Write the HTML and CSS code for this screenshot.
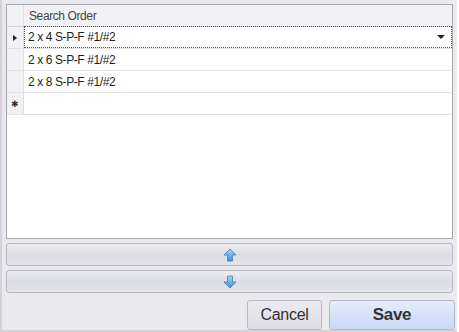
FILE: index.html
```html
<!DOCTYPE html>
<html lang="en">
<head>
    <meta charset="UTF-8">
    <title>Search Order</title>
    <link rel="stylesheet" href="styles.css">
</head>
<body>
    <div class="form">
        <div class="grid">
            <div class="row header">
                <div class="ind"></div>
                <div class="cell">Search Order</div>
            </div>
            <div class="row">
                <div class="ind"><span class="tri"></span></div>
                <div class="cell current">2 x 4 S-P-F #1/#2<span class="drop"></span></div>
            </div>
            <div class="row">
                <div class="ind"></div>
                <div class="cell">2 x 6 S-P-F #1/#2</div>
            </div>
            <div class="row">
                <div class="ind"></div>
                <div class="cell">2 x 8 S-P-F #1/#2</div>
            </div>
            <div class="row">
                <div class="ind"><span class="star">&#10033;</span></div>
                <div class="cell"></div>
            </div>
        </div>

        <button class="move">
            <svg width="14" height="14" viewBox="0 0 14 14">
                <defs>
                    <linearGradient id="gu" x1="0" y1="0" x2="0" y2="1">
                        <stop offset="0" stop-color="#a9d3f5"/>
                        <stop offset="1" stop-color="#3f8fd6"/>
                    </linearGradient>
                </defs>
                <path d="M7 1 L13 7 L9.5 7 L9.5 13 L4.5 13 L4.5 7 L1 7 Z" fill="url(#gu)" stroke="#3d7fbf" stroke-width="0.8" stroke-linejoin="round"/>
            </svg>
        </button>
        <button class="move">
            <svg width="14" height="14" viewBox="0 0 14 14">
                <defs>
                    <linearGradient id="gd" x1="0" y1="0" x2="0" y2="1">
                        <stop offset="0" stop-color="#a9d3f5"/>
                        <stop offset="1" stop-color="#3f8fd6"/>
                    </linearGradient>
                </defs>
                <path d="M4.5 1 L9.5 1 L9.5 7 L13 7 L7 13 L1 7 L4.5 7 Z" fill="url(#gd)" stroke="#3d7fbf" stroke-width="0.8" stroke-linejoin="round"/>
            </svg>
        </button>

        <div class="actions">
            <button class="btn cancel">Cancel</button>
            <button class="btn save">Save</button>
        </div>
    </div>
</body>
</html>
```

FILE: styles.css
```css
body {
    margin: 0;
    background: #fff;
    font-family: "Liberation Sans", Arial, sans-serif;
}

.form {
    width: 457px;
    height: 332px;
    background: #e9e9ee;
    border-left: 2px solid #d2d2d8;
    border-bottom: 2px solid #d2d2d8;
    padding: 4px 4px 0 4px;
    box-sizing: border-box;
    display: flex;
    flex-direction: column;
}

.grid {
    height: 235px;
    flex: none;
    background: #fff;
    border: 1px solid #a8a8b0;
    box-sizing: border-box;
    margin-bottom: 4px;
}

.row {
    display: flex;
    height: 21px;
    border-bottom: 1px solid #e1e1e6;
}

.ind {
    width: 16px;
    flex: none;
    background: #f2f2f5;
    border-right: 1px solid #dcdce2;
    display: flex;
    align-items: center;
    justify-content: center;
}

.cell {
    flex: 1;
    font-size: 12px;
    letter-spacing: -0.4px;
    color: #1e1e1e;
    padding-left: 4px;
    display: flex;
    align-items: center;
    position: relative;
}

.header .cell {
    background: #f2f2f5;
    color: #444;
    padding-left: 5px;
}

.header {
    border-bottom: 1px solid #d6d6dc;
}

.cell.current {
    border: 1px dotted #555;
    margin: -1px 0 0 0;
    padding-left: 3px;
}

.tri {
    width: 0;
    height: 0;
    border-top: 3px solid transparent;
    border-bottom: 3px solid transparent;
    border-left: 4px solid #222;
}

.star {
    font-size: 9px;
    color: #333;
}

.drop {
    position: absolute;
    right: 6px;
    top: 8px;
    width: 0;
    height: 0;
    border-left: 4px solid transparent;
    border-right: 4px solid transparent;
    border-top: 4px solid #222;
}

.move {
    height: 23px;
    flex: none;
    margin: 0 0 4px 0;
    border: 1px solid #b8b8c0;
    border-radius: 3px;
    background: linear-gradient(#ececf0, #dcdde4 50%, #e3e3e9);
    display: flex;
    align-items: center;
    justify-content: center;
    padding: 0;
}

.actions {
    display: flex;
    justify-content: flex-end;
    gap: 7px;
    margin-top: 3px;
}

.btn {
    height: 30px;
    border: 1px solid #b8b8c0;
    border-radius: 3px;
    font-family: "Liberation Sans", Arial, sans-serif;
    font-size: 16px;
    letter-spacing: -0.3px;
    color: #333;
    padding: 0;
}

.cancel {
    width: 75px;
    background: linear-gradient(#ececf0, #dcdde4);
}

.save {
    width: 126px;
    margin-right: -2px;
    background: linear-gradient(#e4ecfb, #c9d8f5);
    font-weight: bold;
    font-size: 17px;
}
```
